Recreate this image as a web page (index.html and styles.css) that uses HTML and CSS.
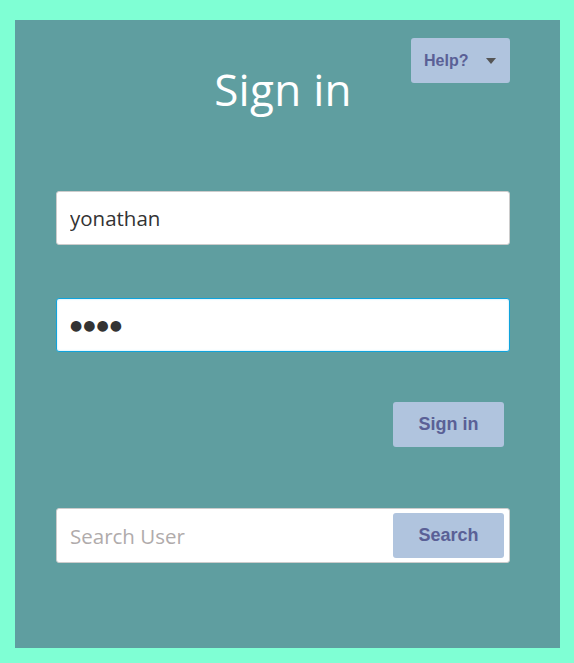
FILE: index.html
```html
<!DOCTYPE html>
<html>
<head>
<meta charset="utf-8">
<link rel="stylesheet" href="styles.css">
</head>
<body>
<div class="panel">
  <button class="help-btn" type="button">Help? <span class="caret"></span></button>
  <h1 class="title">Sign in</h1>
  <form class="form">
    <input class="field" type="text" value="yonathan">
    <input class="field field-focus" type="text" value="●●●●" aria-label="Password" readonly>
    <div class="actions">
      <button class="btn" type="button">Sign in</button>
    </div>
    <div class="search-group">
      <input class="search-input" type="text" placeholder="Search User">
      <button class="btn" type="button">Search</button>
    </div>
  </form>
</div>
</body>
</html>
```
FILE: styles.css
```css
html, body {
  margin: 0;
  padding: 0;
}
body {
  background: #7fffd4;
  padding: 20px 14px 15px 15px;
  height: 663px;
  box-sizing: border-box;
}
.panel {
  position: relative;
  background: #5f9ea0;
  height: 628px;
  box-sizing: border-box;
  padding: 44px 50px 0 41px;
}
.help-btn {
  position: absolute;
  top: 18px;
  right: 50px;
  width: 99px;
  height: 45px;
  background: #b0c4de;
  border: none;
  border-radius: 3px;
  font-family: "Liberation Sans", Arial, sans-serif;
  font-weight: bold;
  font-size: 16px;
  color: #5a6096;
  display: flex;
  align-items: center;
  padding: 0 0 0 13px;
}
.caret {
  width: 0;
  height: 0;
  border-left: 5px solid transparent;
  border-right: 5px solid transparent;
  border-top: 6px solid #555;
  margin-left: 18px;
}
.title {
  margin: 0;
  font-family: "Open Sans", "Noto Sans", sans-serif;
  font-weight: normal;
  font-size: 44px;
  line-height: 50px;
  color: #fff;
  text-align: center;
  letter-spacing: 0.3px;
}
.form {
  display: flex;
  flex-direction: column;
  margin-top: 77px;
}
.field {
  height: 54px;
  box-sizing: border-box;
  border: 1px solid #ccc;
  border-radius: 3px;
  background: #fff;
  padding: 0 13px;
  font-family: "Open Sans", "Noto Sans", sans-serif;
  font-size: 20.5px;
  color: #333;
  outline: none;
  margin: 0 0 53px 0;
}
.field-focus {
  border: 1px solid #0fa3dc;
  box-shadow: inset 0 0 2px rgba(15, 163, 220, 0.35);
  margin-bottom: 50px;
  font-family: "DejaVu Sans", sans-serif;
  font-size: 14px;
  letter-spacing: 1px;
  padding-left: 13px;
}
.actions {
  display: flex;
  justify-content: flex-end;
  padding-right: 6px;
  margin-bottom: 61px;
}
.btn {
  width: 111px;
  height: 45px;
  background: #b0c4de;
  border: none;
  border-radius: 3px;
  font-family: "Liberation Sans", Arial, sans-serif;
  font-weight: bold;
  font-size: 18px;
  color: #5a6096;
  padding: 0;
}
.search-group {
  display: flex;
  align-items: center;
  height: 55px;
  box-sizing: border-box;
  border: 1px solid #ccc;
  border-radius: 3px;
  background: #fff;
  padding-right: 5px;
}
.search-input {
  flex: 1;
  min-width: 0;
  border: none;
  outline: none;
  background: transparent;
  padding: 0 0 0 13px;
  font-family: "Open Sans", "Noto Sans", sans-serif;
  font-size: 20.5px;
  color: #333;
  height: 100%;
}
.search-input::placeholder {
  color: #b0abab;
}
```
